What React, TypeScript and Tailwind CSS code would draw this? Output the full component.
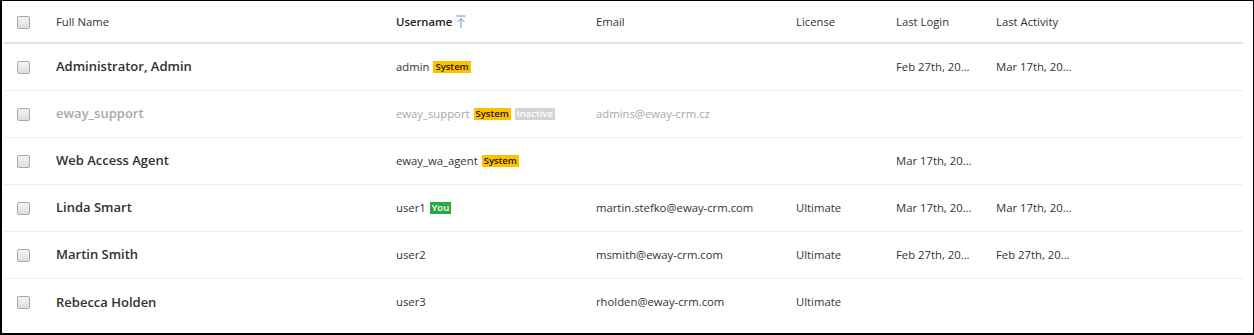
import React from 'react';

type Badge = { label: string; kind: 'system' | 'inactive' | 'you' };

type User = {
  name: string;
  username: string;
  badges?: Badge[];
  email?: string;
  license?: string;
  lastLogin?: string;
  lastActivity?: string;
  inactive?: boolean;
};

const users: User[] = [
  { name: 'Administrator, Admin', username: 'admin', badges: [{ label: 'System', kind: 'system' }], lastLogin: 'Feb 27th, 20...', lastActivity: 'Mar 17th, 20...' },
  { name: 'eway_support', username: 'eway_support', badges: [{ label: 'System', kind: 'system' }, { label: 'Inactive', kind: 'inactive' }], email: 'admins@eway-crm.cz', inactive: true },
  { name: 'Web Access Agent', username: 'eway_wa_agent', badges: [{ label: 'System', kind: 'system' }], lastLogin: 'Mar 17th, 20...' },
  { name: 'Linda Smart', username: 'user1', badges: [{ label: 'You', kind: 'you' }], email: 'martin.stefko@eway-crm.com', license: 'Ultimate', lastLogin: 'Mar 17th, 20...', lastActivity: 'Mar 17th, 20...' },
  { name: 'Martin Smith', username: 'user2', email: 'msmith@eway-crm.com', license: 'Ultimate', lastLogin: 'Feb 27th, 20...', lastActivity: 'Feb 27th, 20...' },
  { name: 'Rebecca Holden', username: 'user3', email: 'rholden@eway-crm.com', license: 'Ultimate' },
];

const cols = 'grid grid-cols-[52px_340px_200px_200px_100px_100px_1fr] items-center';

function Checkbox() {
  return (
    <span className="block w-[13px] h-[13px] rounded-[2px] border border-[#a9a9a9] bg-gradient-to-b from-[#f4f4f4] to-[#dedede] ml-[13px]" />
  );
}

function Tag({ badge }: { badge: Badge }) {
  const color =
    badge.kind === 'system'
      ? 'bg-[#ffc000] text-[#1a1a1a]'
      : badge.kind === 'inactive'
        ? 'bg-[#d3d3d3] text-white'
        : 'bg-[#28a745] text-white';
  return (
    <span className={`ml-[4px] inline-flex items-center h-[12px] px-[2px] text-[9.5px] font-semibold leading-none ${color}`}>
      {badge.label}
    </span>
  );
}

function SortIcon() {
  return (
    <svg width="10" height="14" viewBox="0 0 10 14" className="ml-[4px] mb-[1px]">
      <line x1="0.5" y1="1" x2="9.5" y2="1" stroke="#7a8a99" strokeWidth="1" />
      <path d="M5 3.5 V13" stroke="#5b9bd5" strokeWidth="1" fill="none" />
      <path d="M1.5 7 L5 3.5 L8.5 7" stroke="#5b9bd5" strokeWidth="1" fill="none" />
    </svg>
  );
}

export default function App() {
  return (
    <div
      className="w-[1254px] h-[335px] border-t border-r border-l-2 border-b-2 border-black bg-white overflow-hidden"
      style={{ fontFamily: '"Open Sans", "Noto Sans", sans-serif' }}
    >
      <div className="mx-[2px] w-[1239px]">
        <div className={`${cols} h-[43px] pt-[2px] border-b-2 border-[#e1e1e1] text-[11.3px] text-[#333]`}>
          <Checkbox />
          <span>Full Name</span>
          <span className="flex items-center font-semibold text-[#222]">
            Username
            <SortIcon />
          </span>
          <span>Email</span>
          <span>License</span>
          <span>Last Login</span>
          <span>Last Activity</span>
        </div>
        {users.map((u, i) => (
          <div
            key={u.username}
            className={`${cols} h-[47px] text-[11.3px] ${i < users.length - 1 ? 'border-b border-[#ededed]' : ''} ${u.inactive ? 'text-[#a8a8a8]' : 'text-[#333]'}`}
          >
            <Checkbox />
            <span className={`text-[13px] font-semibold ${u.inactive ? 'text-[#a8a8a8]' : 'text-[#323130]'}`}>{u.name}</span>
            <span className="flex items-center">
              {u.username}
              {u.badges?.map((b) => <Tag key={b.label} badge={b} />)}
            </span>
            <span>{u.email}</span>
            <span>{u.license}</span>
            <span>{u.lastLogin}</span>
            <span>{u.lastActivity}</span>
          </div>
        ))}
      </div>
    </div>
  );
}
